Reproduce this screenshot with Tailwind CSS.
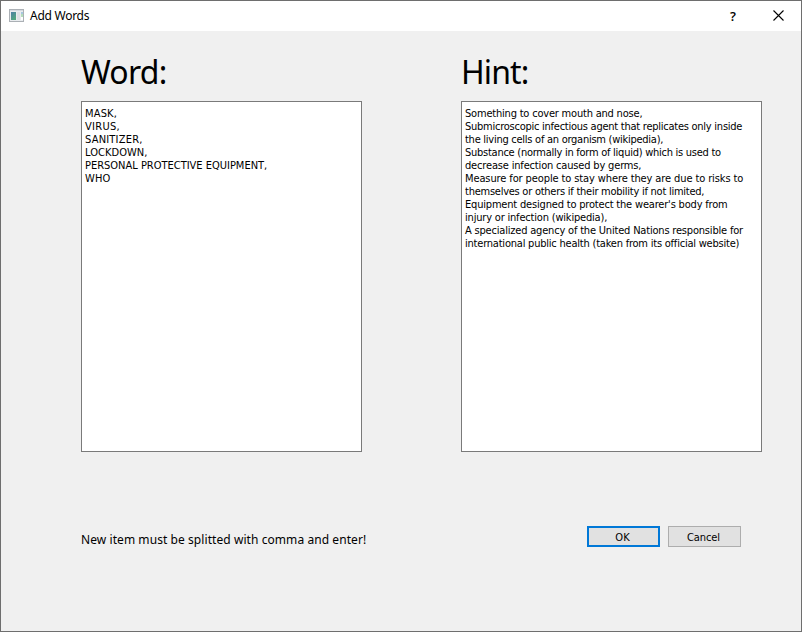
<!DOCTYPE html>
<html lang="en">
<head>
<meta charset="utf-8">
<title>Add Words</title>
<script src="https://cdn.jsdelivr.net/npm/@tailwindcss/browser@4"></script>
</head>
<body class="bg-[#6e6e6e] text-black font-['DejaVu_Sans_Condensed','DejaVu_Sans',sans-serif]">
<div class="w-[802px] h-[632px] border border-[#6e6e6e] bg-[#f0f0f0] flex flex-col overflow-hidden">
  <header class="h-[30px] shrink-0 bg-white flex items-center pl-2">
    <svg class="w-[15px] h-[13px] shrink-0 mb-px" viewBox="0 0 15 13" shape-rendering="crispEdges">
      <defs><linearGradient id="g" x1="0" y1="0" x2="0.6" y2="1"><stop offset="0" stop-color="#4d7fa5"/><stop offset="1" stop-color="#51a77e"/></linearGradient></defs>
      <rect width="15" height="13" fill="#abb0b5"/>
      <rect x="1" y="1" width="13" height="1" fill="#d4d9df"/>
      <rect x="1" y="2" width="13" height="10" fill="#e9ecef"/>
      <rect x="2" y="3" width="5" height="8" fill="url(#g)"/>
      <rect x="8" y="3" width="3" height="8" fill="#dde0e4"/>
      <rect x="12" y="3" width="2" height="2" fill="#a6c7df"/>
      <rect x="12" y="5" width="2" height="3" fill="#b4dcbc"/>
      <rect x="12" y="8" width="2" height="3" fill="#fff"/>
    </svg>
    <h1 class="ml-[6px] text-[12px] leading-4 tracking-[-0.26px] whitespace-nowrap font-['Noto_Sans',sans-serif]">Add Words</h1>
    <div class="ml-auto flex h-full">
      <div class="w-[46px] flex items-center justify-center pb-px"><span class="text-[13px] leading-4 font-semibold font-['Open_Sans',sans-serif]">?</span></div>
      <div class="w-[45px] flex items-center justify-center"><svg class="w-[11px] h-[11px] mb-px" viewBox="0 0 11 11" stroke="#000" stroke-width="1.1" fill="none"><path d="M.5 .5l10 10M10.500 .5l-10 10"/></svg></div>
    </div>
  </header>
  <main class="pl-20 pt-[20px] flex">
    <section class="w-[281px]">
      <h2 class="h-[50px] text-[32px] leading-[42px] tracking-[-0.75px] whitespace-nowrap font-['Noto_Sans',sans-serif]">Word:</h2>
      <div class="h-[351px] border border-[#7a7a7a] bg-white pl-[3px] pt-[5px] text-[11px] leading-[13px] whitespace-nowrap">
        <p class="tracking-[0.16px]">MASK,</p>
        <p class="tracking-[0.3px]">VIRUS,</p>
        <p class="tracking-[0.2px]">SANITIZER,</p>
        <p class="tracking-[0.04px]">LOCKDOWN,</p>
        <p class="tracking-[-0.01px]">PERSONAL PROTECTIVE EQUIPMENT,</p>
        <p class="tracking-[0.1px]">WHO</p>
      </div>
    </section>
    <section class="w-[301px] ml-[99px]">
      <h2 class="h-[50px] text-[32px] leading-[42px] tracking-[-0.9px] whitespace-nowrap font-['Noto_Sans',sans-serif]">Hint:</h2>
      <div class="h-[351px] border border-[#7a7a7a] bg-white pl-[3px] pt-[5px] text-[11px] leading-[13px] whitespace-nowrap">
        <p class="tracking-[-0.2px]">Something to cover mouth and nose,</p>
        <p class="tracking-[-0.25px]">Submicroscopic infectious agent that replicates only inside</p>
        <p class="tracking-[-0.26px]">the living cells of an organism (wikipedia),</p>
        <p class="tracking-[-0.26px]">Substance (normally in form of liquid) which is used to</p>
        <p class="tracking-[-0.17px]">decrease infection caused by germs,</p>
        <p class="tracking-[-0.11px]">Measure for people to stay where they are due to risks to</p>
        <p class="tracking-[-0.25px]">themselves or others if their mobility if not limited,</p>
        <p class="tracking-[-0.185px]">Equipment designed to protect the wearer's body from</p>
        <p class="tracking-[-0.19px]">injury or infection (wikipedia),</p>
        <p class="tracking-[-0.19px]">A specialized agency of the United Nations responsible for</p>
        <p class="tracking-[-0.215px]">international public health (taken from its official website)</p>
      </div>
    </section>
  </main>
  <footer class="mt-[74px] pl-20 pr-[60px] flex items-start justify-between">
    <p class="pt-[6px] text-[12px] leading-4 tracking-[0.07px] whitespace-nowrap font-['Noto_Sans',sans-serif]">New item must be splitted with comma and enter!</p>
    <div class="flex gap-2 text-[11px] leading-[13px]">
      <button class="w-[73px] h-[21px] border-2 border-[#0078d7] bg-[#e1e1e1] flex items-center justify-center pr-[2px] pt-px">OK</button>
      <button class="w-[73px] h-[21px] border border-[#adadad] bg-[#e1e1e1] flex items-center justify-center pr-[2px] pt-px tracking-[-0.1px]">Cancel</button>
    </div>
  </footer>
</div>
</body>
</html>
